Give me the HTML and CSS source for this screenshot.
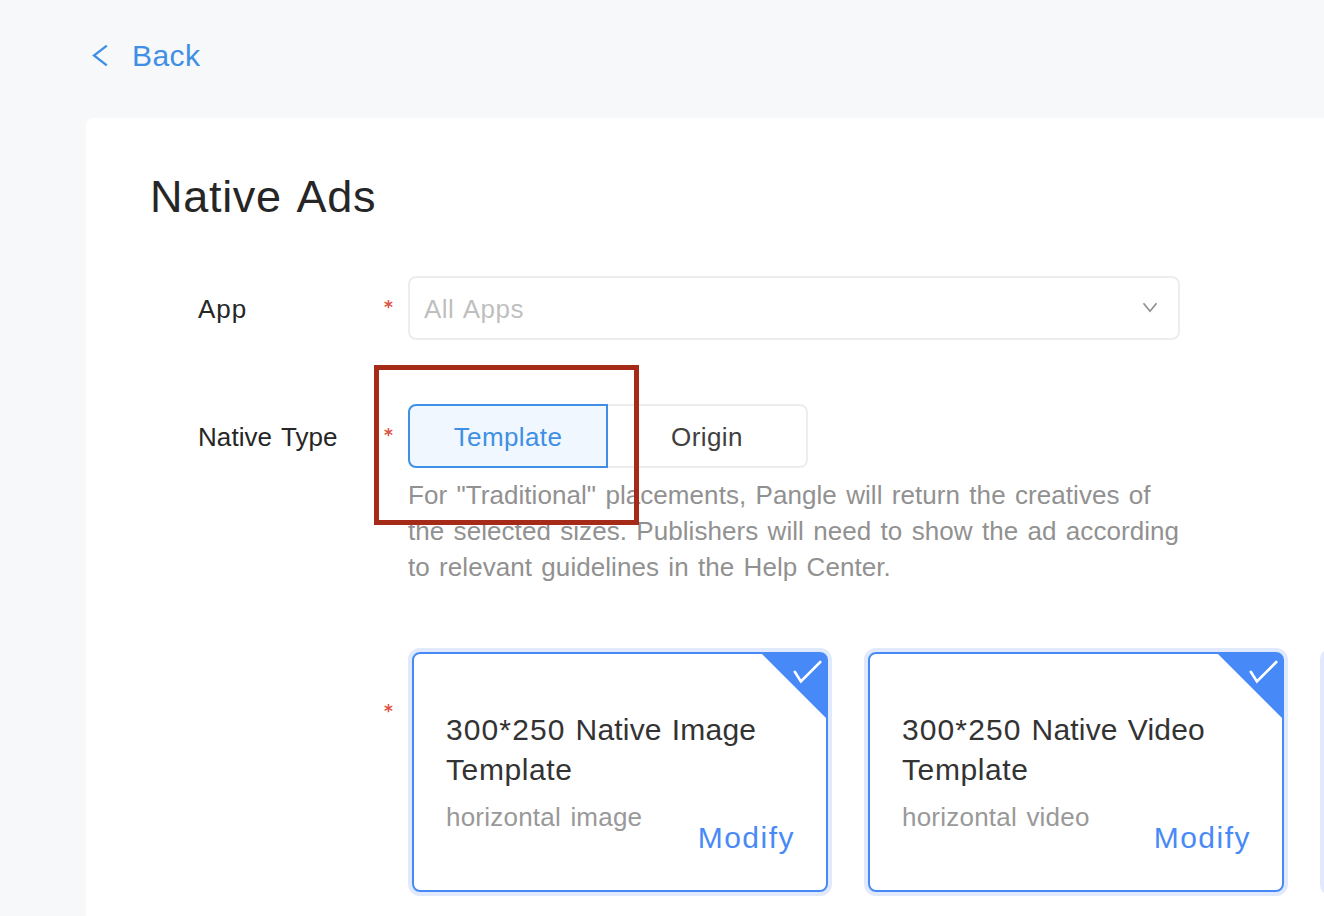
FILE: index.html
```html
<!DOCTYPE html>
<html lang="en">
<head>
<meta charset="utf-8">
<title>Native Ads</title>
<link rel="stylesheet" href="styles.css">
</head>
<body>
<div class="page">
  <a class="back">
    <svg class="back-icon" width="18" height="24" viewBox="0 0 18 24"><path d="M15.800 2.700 3 12.500l12.800 9.800" fill="none" stroke="currentColor" stroke-width="2.300"/></svg>
    <span class="back-text">Back</span>
  </a>
  <main class="panel">
    <h1 class="title">Native Ads</h1>
    <div class="row">
      <label class="label label-app">App</label>
      <span class="required">*</span>
      <div class="select">
        <span class="placeholder">All Apps</span>
        <svg width="16" height="12" viewBox="0 0 16 12"><path d="M1.500 1.200 8 9.200l6.500-8" fill="none" stroke="#8f8f8f" stroke-width="1.700"/></svg>
      </div>
    </div>
    <div class="row row-type">
      <label class="label label-type">Native Type</label>
      <span class="required">*</span>
      <div class="segments">
        <button class="segment active">Template</button>
        <button class="segment last">Origin</button>
      </div>
      <div class="highlight"></div>
    </div>
    <p class="desc">For "Traditional" placements, Pangle will return the creatives of<br>the selected sizes. Publishers will need to show the ad according<br>to relevant guidelines in the Help Center.</p>
    <div class="cards-row">
      <span class="required">*</span>
      <div class="cards">
        <article class="card">
          <h2 class="card-title"><span class="size">300*250</span> Native Image<br><span class="kind">Template</span></h2>
          <p class="card-sub">horizontal image</p>
          <a class="modify">Modify</a>
          <svg class="corner" width="66" height="66" viewBox="0 0 66 66"><path d="M0 0H66V66Z" fill="#478af7"/><path d="M33.800 18.800 39.900 28.500 59.300 9" fill="none" stroke="#fff" stroke-width="2.600" stroke-linecap="round"/></svg>
        </article>
        <article class="card">
          <h2 class="card-title"><span class="size">300*250</span> Native Video<br><span class="kind">Template</span></h2>
          <p class="card-sub">horizontal video</p>
          <a class="modify">Modify</a>
          <svg class="corner" width="66" height="66" viewBox="0 0 66 66"><path d="M0 0H66V66Z" fill="#478af7"/><path d="M33.800 18.800 39.900 28.500 59.300 9" fill="none" stroke="#fff" stroke-width="2.600" stroke-linecap="round"/></svg>
        </article>
        <article class="card"></article>
      </div>
    </div>
  </main>
</div>
</body>
</html>
```
FILE: styles.css
```css
* { box-sizing: border-box; }
body {
  margin: 0;
  background: #f7f8fa;
  color: #262626;
  font: 26px/36px "Liberation Sans", Arial, sans-serif;
}
.page {
  height: 916px;
  overflow: hidden;
  padding: 35px 0 0 86px;
}
.back {
  display: flex;
  align-items: center;
  height: 40px;
  padding-left: 5px;
  color: #3f8fe4;
  font-size: 30px;
}
.back-icon { margin-right: 23px; }
.back-text {
  padding-top: 2px;
  letter-spacing: 0.4px;
}
.panel {
  height: 850px;
  margin-top: 43px;
  padding: 49px 0 0 64px;
  background: #fff;
  border-radius: 8px 0 0 0;
}
.title {
  margin: 0 0 49px;
  font-size: 45px;
  font-weight: 400;
  line-height: 60px;
  letter-spacing: 0.7px;
  word-spacing: 4px;
}
.row {
  display: flex;
  align-items: center;
  position: relative;
  height: 64px;
  padding-left: 48px;
}
.row-type { margin-top: 64px; }
.label {
  width: 186px;
  padding-top: 2px;
  white-space: nowrap;
}
.label-app { letter-spacing: 1px; }
.label-type {
  letter-spacing: 0.07px;
  word-spacing: 2px;
}
.required {
  width: 24px;
  flex: none;
  padding-bottom: 3px;
  color: #e0503f;
  font: bold 17px/20px "DejaVu Sans", sans-serif;
}
.select {
  display: flex;
  align-items: center;
  justify-content: space-between;
  width: 772px;
  height: 64px;
  padding: 0 20px 0 14px;
  border: 2px solid #ededed;
  border-radius: 8px;
}
.placeholder {
  padding-top: 2px;
  color: #bfbfbf;
  letter-spacing: 0.5px;
  word-spacing: 2px;
}
.segments { display: flex; }
.segment {
  width: 200px;
  height: 64px;
  padding: 2px 0 0;
  border: 2px solid #ededed;
  background: #fff;
  color: #404040;
  font: inherit;
  letter-spacing: 0.4px;
}
.active {
  border-color: #3f8fe4;
  border-radius: 8px 0 0 8px;
  background: #f0f7ff;
  color: #3f8fe4;
}
.last {
  border-left: 0;
  border-radius: 0 8px 8px 0;
}
.highlight {
  position: absolute;
  top: -39px;
  left: 224px;
  width: 265px;
  height: 160px;
  border: 5px solid #a52a18;
}
.desc {
  margin: 9px 0 0 258px;
  color: #919191;
  letter-spacing: 0.06px;
  word-spacing: 2px;
  white-space: nowrap;
}
.cards-row {
  display: flex;
  margin-top: 67px;
  padding-left: 234px;
}
.cards-row .required {
  width: 28px;
  padding-top: 49px;
}
.cards {
  display: flex;
  gap: 40px;
}
.card {
  position: relative;
  flex: none;
  width: 416px;
  height: 240px;
  padding: 56px 32px 0;
  border: 2px solid #478af7;
  border-radius: 8px;
  box-shadow: 0 0 0 4px #e1eafd;
}
.card-title {
  margin: 0;
  color: #333;
  font-size: 30px;
  font-weight: 400;
  line-height: 40px;
  letter-spacing: 0.2px;
  word-spacing: 1.5px;
  white-space: nowrap;
}
.size { letter-spacing: 1.1px; }
.kind { letter-spacing: 0.6px; }
.card-sub {
  margin: 9px 0 0;
  color: #999;
  letter-spacing: 0.22px;
  word-spacing: 2px;
}
.modify {
  display: block;
  margin: -17px -1px 0 0;
  color: #478af7;
  font-size: 30px;
  line-height: 40px;
  letter-spacing: 1.5px;
  text-align: right;
}
.corner {
  position: absolute;
  top: -1px;
  right: -1px;
  border-top-right-radius: 6px;
}
```
